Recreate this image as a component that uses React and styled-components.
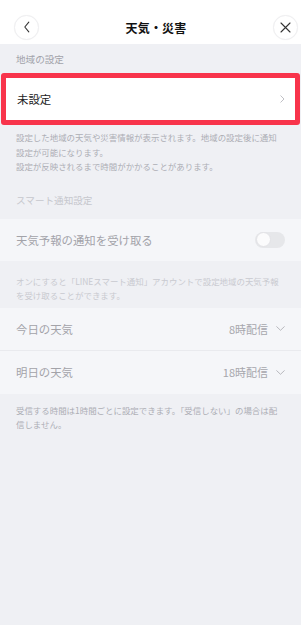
import React from "react"
import styled, { createGlobalStyle } from "styled-components"

const GlobalStyle = createGlobalStyle`
html, body {
    margin:0;
    padding:0;
    background-color:#eff0f4;
}
body{
    font-family:"Noto Sans CJK JP","Noto Sans",sans-serif;
    -webkit-font-smoothing:antialiased;
}
`

function ChevronLeft() {
    return (
        <svg width="8" height="12" viewBox="0 0 8 12" fill="none">
            <path d="M5.8 1.2 L1.8 6 L5.8 10.8" stroke="#333" strokeWidth="1.1" strokeLinecap="round" strokeLinejoin="round" />
        </svg>
    )
}

function CloseIcon() {
    return (
        <svg width="11" height="11" viewBox="0 0 11 11" fill="none">
            <path d="M1 1 L10 10 M10 1 L1 10" stroke="#333" strokeWidth="1.1" strokeLinecap="round" />
        </svg>
    )
}

function ChevronRight() {
    return (
        <svg width="5" height="8" viewBox="0 0 5 8" fill="none">
            <path d="M0.8 0.8 L4 4 L0.8 7.2" stroke="#b9b9be" strokeWidth="0.9" strokeLinecap="round" strokeLinejoin="round" />
        </svg>
    )
}

function ChevronDown() {
    return (
        <svg width="9" height="5" viewBox="0 0 9 5" fill="none">
            <path d="M0.7 0.7 L4.5 4.3 L8.3 0.7" stroke="#b2b2b8" strokeWidth="0.9" strokeLinecap="round" strokeLinejoin="round" />
        </svg>
    )
}

export default function App() {
    return (
        <>
            <GlobalStyle />
            <Page>
                <Header>
                    <RoundButton><ChevronLeft /></RoundButton>
                    <Title>天気・災害</Title>
                    <RoundButton><CloseIcon /></RoundButton>
                </Header>

                <SectionTitle $height={29} $pad={0}>地域の設定</SectionTitle>
                <Highlight>
                    <Row $height={42}>
                        <RowLabel>未設定</RowLabel>
                        <ChevronRight />
                    </Row>
                </Highlight>
                <Note $pad={5}>
                    設定した地域の天気や災害情報が表示されます。地域の設定後に通知設定が可能になります。<br />
                    設定が反映されるまで時間がかかることがあります。
                </Note>

                <SectionTitle $height={45} $pad={8} $muted>スマート通知設定</SectionTitle>
                <Row $height={42} $disabled>
                    <RowLabel $disabled>天気予報の通知を受け取る</RowLabel>
                    <Toggle><Knob /></Toggle>
                </Row>
                <Note $pad={13} $muted>
                    オンにすると「LINEスマート通知」アカウントで設定地域の天気予報を受け取ることができます。
                </Note>

                <Group>
                    <Row $height={43} $disabled $divider>
                        <RowLabel $disabled>今日の天気</RowLabel>
                        <Value>8時配信<ChevronDown /></Value>
                    </Row>
                    <Row $height={43} $disabled>
                        <RowLabel $disabled>明日の天気</RowLabel>
                        <Value>18時配信<ChevronDown /></Value>
                    </Row>
                </Group>
                <Note $pad={9}>
                    受信する時間は1時間ごとに設定できます。「受信しない」の場合は配信しません。
                </Note>
            </Page>
        </>
    )
}

const Page = styled.div`
min-height:625px;
background-color:#eff0f4;
display:flex;
flex-direction:column;
`

const Header = styled.header`
height:44px;
box-sizing:border-box;
padding:10px 3px 0 14px;
background-color:#fff;
display:flex;
align-items:center;
justify-content:space-between;
`

const RoundButton = styled.div`
width:25px;
height:25px;
box-sizing:border-box;
border-radius:50%;
border:1px solid #efeff1;
box-shadow:0 0 1px rgba(0,0,0,0.06);
background-color:#fff;
display:flex;
align-items:center;
justify-content:center;
`

const Title = styled.h1`
margin:0;
font-size:12px;
font-weight:700;
color:#111;
letter-spacing:0.2px;
`

const SectionTitle = styled.div`
height:${p => p.$height}px;
box-sizing:border-box;
padding:${p => p.$pad}px 16px 0;
display:flex;
align-items:center;
font-size:9.6px;
color:${p => p.$muted ? "#c6c7cd" : "#a2a3aa"};
`

const Highlight = styled.div`
margin:0 1px;
border:5px solid #f8344b;
border-radius:3px;
`

const Row = styled.div`
height:${p => p.$height}px;
box-sizing:border-box;
padding:0 ${p => p.$disabled ? 16 : 10}px 0 ${p => p.$disabled ? 16 : 11}px;
background-color:${p => p.$disabled ? "#f5f6f9" : "#fff"};
display:flex;
align-items:center;
justify-content:space-between;
border-bottom:${p => p.$divider ? "1px solid #e9eaee" : "none"};
`

const RowLabel = styled.span`
font-size:11.4px;
color:${p => p.$disabled ? "#a3a3a9" : "#222"};
`

const Value = styled.span`
display:flex;
align-items:center;
gap:8px;
font-size:11px;
color:#a6a6ac;
`

const Group = styled.div`
margin-top:5px;
display:flex;
flex-direction:column;
`

const Note = styled.p`
margin:0;
padding:${p => p.$pad}px 18px 0 16px;
font-size:8.45px;
line-height:14.5px;
color:${p => p.$muted ? "#c9cad0" : "#adaeb4"};
`

const Toggle = styled.div`
width:30px;
height:16px;
border-radius:8px;
background-color:#e6e7ea;
display:flex;
align-items:center;
padding:0 1px;
box-sizing:border-box;
`

const Knob = styled.div`
width:15px;
height:15px;
border-radius:50%;
box-sizing:border-box;
background-color:#fbfbfc;
border:1px solid #e2e2e6;
`
